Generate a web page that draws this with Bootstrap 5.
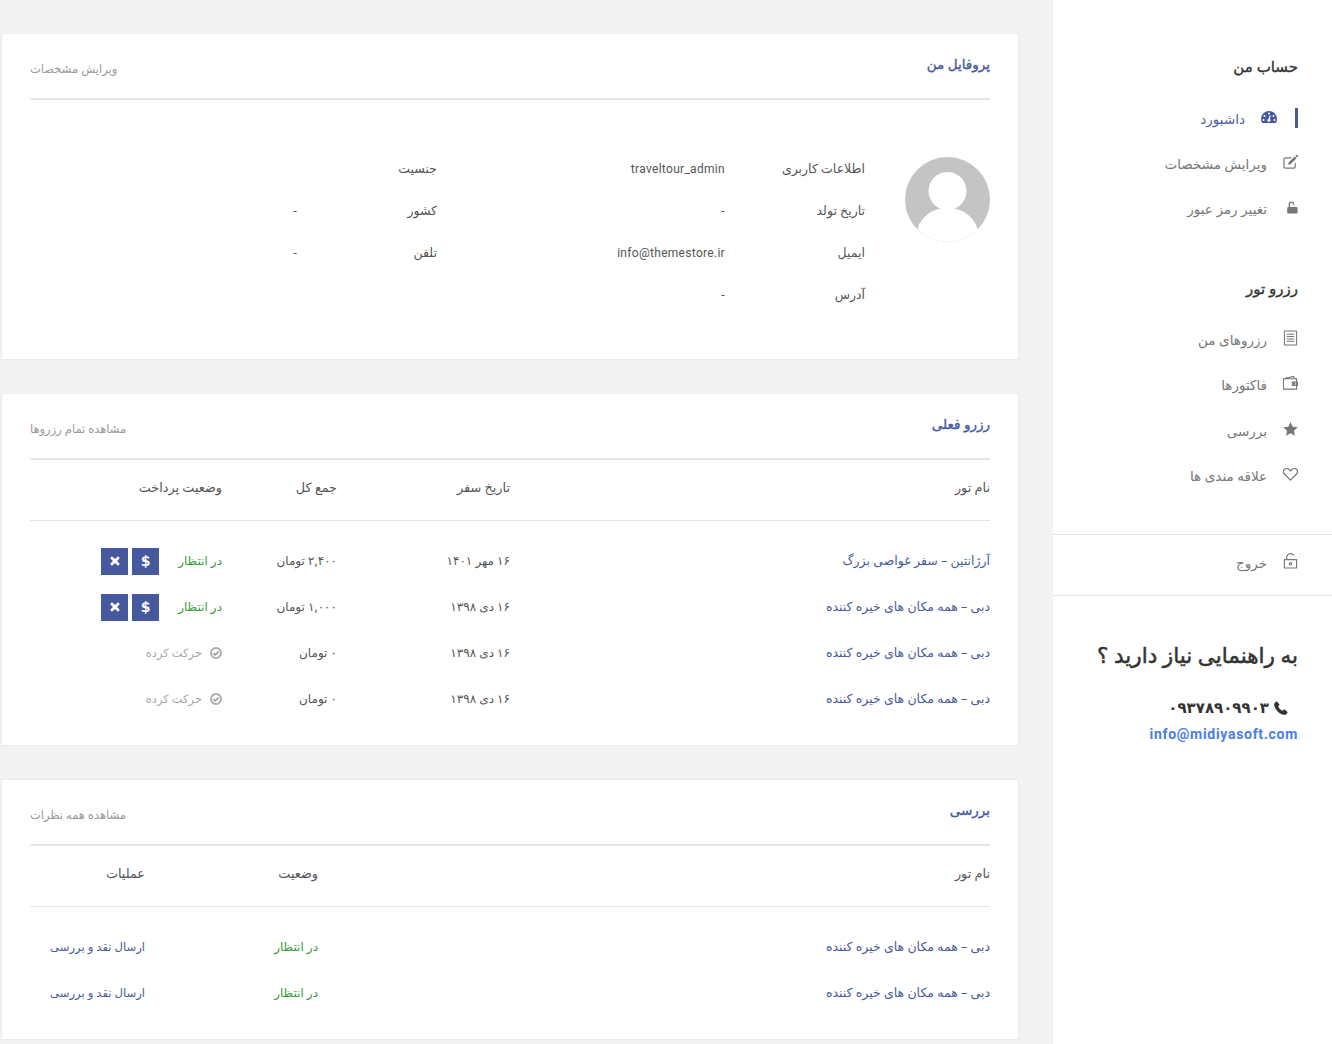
<!DOCTYPE html>
<html lang="fa" dir="rtl">
<head>
<meta charset="utf-8">
<title>پروفایل من</title>
<link href="https://cdn.jsdelivr.net/npm/bootstrap@5.3.0/dist/css/bootstrap.min.css" rel="stylesheet">
<style>
html,body{height:1044px;overflow:hidden}
body{background:#f3f3f3;font-family:"Noto Sans","DejaVu Sans",sans-serif;font-size:12px;color:#666}
.pg{width:1332px;height:1044px;overflow:hidden}
.side{width:279px;flex:none;background:#fff;height:1044px}
.main{width:1018px;margin-right:34px;margin-left:1px;padding-top:33px}
.sec-title{font-size:15px;font-weight:400;-webkit-text-stroke:.35px #333;color:#333;margin:0 0 20px;line-height:20px}
.side-group{padding:56px 34px 0}
.side-group+.side-group{padding-top:47px}
.side-group+.side-group .sec-title{margin-bottom:19px}
.side-group+.side-group .side-link{height:45.5px}
.side-link{height:45px;color:#777;font-size:13.5px;text-decoration:none;gap:16px;position:relative}
.side-link svg{width:15px;height:16px;flex:none;margin-top:-4px}
.side-link span{line-height:20px}
.side-link.on{color:#4a5b9c;padding-right:21px;gap:16px}
.side-link.on svg{width:16px}
.on-bar{position:absolute;right:0;top:12px;width:3px;height:20px;background:#46599f}
.exit-row{border-top:1px solid #e6e6e6;border-bottom:1px solid #e6e6e6;height:62px;padding:0 34px 4px;margin-top:35px}
.help{padding:46px 34px 0}
.help h4{font-size:21.5px;font-weight:400;-webkit-text-stroke:.5px #333;color:#333;margin:0 0 30px;line-height:26px;white-space:nowrap}
.help-tel{font-family:"DejaVu Sans",sans-serif;font-size:15px;font-weight:700;color:#333;line-height:20px;gap:5px;padding-right:10px;letter-spacing:3.3px}
.help-mail{font-family:Roboto,sans-serif;font-weight:700;font-size:14px;color:#4d7ce8;letter-spacing:.7px;line-height:20px;margin-top:6px;text-align:right;text-decoration:none;display:block}
.box{background:#fff;border:1px solid #ebebeb;padding:0 28px;margin-bottom:33px}
.box-head{height:66px;border-bottom:2px solid #e6e6e6;padding-top:20px}
.box-title{font-size:13.5px;font-weight:400;-webkit-text-stroke:.35px #46599f;color:#46599f;line-height:20px;margin:0}
.box-link{font-size:11.5px;color:#999;text-decoration:none;line-height:20px;margin-top:5px}
.prof{height:259px;padding-top:58px;gap:40px}
.avatar{width:85px;height:85px;flex:none;margin-top:-1px}
.prof-grid{display:grid;grid-template-columns:140px 288px 140px 140px;grid-auto-rows:42px;color:#555;font-size:12.5px;margin-top:1px}
.prof-grid div{line-height:20px;height:42px}
.prof-grid .prof-en{font-family:Roboto,sans-serif;font-size:12px;letter-spacing:.3px}
.box-mid{height:353px}
.tb{width:960px;table-layout:fixed;margin:0;color:#555;font-size:12px;border-collapse:collapse}
.tb th{font-weight:400;font-size:12.8px;height:60px;border-bottom:1px solid #e6e6e6;padding:0 0 4px;vertical-align:middle}
.tb td{height:46px;padding:0;vertical-align:middle}
.tb tbody tr:first-child td{padding-top:18px;height:64px}
.tb .tour{color:#4a5b9c;font-size:12.5px}
.wait{color:#3a9a3a}
.wait-fix{width:43px;margin-left:16px;white-space:nowrap}
.done{color:#aaa;gap:8px;font-size:11.5px}
.done svg{width:12px;height:12px}
.act{width:27px;height:27px;background:#46599f;color:#fff;display:flex;align-items:center;justify-content:center;border:0;padding:0;border-radius:0}
.act svg{width:14px;height:14px}
.act b{font-family:"DejaVu Sans",sans-serif;font-size:14px}
.review-link{color:#4a5b9c;text-decoration:none;font-size:11.6px}
.box-last{height:261px;margin-bottom:0}
</style>
</head>
<body>
<div class="pg d-flex">
  <aside class="side">
    <div class="side-group">
      <h5 class="sec-title">حساب من</h5>
      <a href="#" class="side-link on d-flex align-items-center"><i class="on-bar"></i>
        <svg viewBox="0 0 16 16"><path fill="#46599f" fill-rule="evenodd" d="M8 2a8 8 0 0 0-8 8c0 1.4.4 2.7 1 3.8.1.2.4.2.5.2h13c.2 0 .4 0 .5-.2.6-1.1 1-2.4 1-3.8a8 8 0 0 0-8-8zM8 3.500a1 1 0 1 1 0 2 1 1 0 0 1 0-2zM3.500 6a1 1 0 1 1 0 2 1 1 0 0 1 0-2zM12.500 6a1 1 0 1 1 0 2 1 1 0 0 1 0-2zM2.500 10a1 1 0 1 1 0 2 1 1 0 0 1 0-2zM13.500 10a1 1 0 1 1 0 2 1 1 0 0 1 0-2zM9.800 6.500 8.900 10.200a1.500 1.500 0 1 1-1.400-.3l1.300-3.600z"/></svg>
        <span>داشبورد</span></a>
      <a href="#" class="side-link d-flex align-items-center">
        <svg viewBox="0 0 16 16" fill="none" stroke="#777"><path stroke-width="1.300" d="M13 9v4a1.500 1.500 0 0 1-1.500 1.500h-9A1.500 1.500 0 0 1 1 13V5a1.500 1.500 0 0 1 1.500-1.500H9"/><path fill="#777" stroke="none" d="M6 8.500 12.500 2l2 2L8 10.500l-2.500.5zM13.200 1.300l.8-.8c.3-.3.7-.3 1 0l1 1c.3.3.3.7 0 1l-.8.8z"/></svg>
        <span>ویرایش مشخصات</span></a>
      <a href="#" class="side-link d-flex align-items-center">
        <svg viewBox="0 0 16 16"><path fill="#777" d="M5 8V5a3 3 0 0 1 6 0v.5H9.500V5a1.500 1.500 0 0 0-3 0v3h7a1 1 0 0 1 1 1v5a1 1 0 0 1-1 1h-9a1 1 0 0 1-1-1V9a1 1 0 0 1 1-1z" transform="translate(1 0)"/></svg>
        <span>تغییر رمز عبور</span></a>
    </div>
    <div class="side-group">
      <h5 class="sec-title">رزرو تور</h5>
      <a href="#" class="side-link d-flex align-items-center">
        <svg viewBox="0 0 16 16" fill="none" stroke="#777" stroke-width="1.100"><path d="M1.500.5h13v15h-13zM4 4h8M4 6.500h8M4 9h8M4 11.500h8"/></svg>
        <span>رزروهای من</span></a>
      <a href="#" class="side-link d-flex align-items-center">
        <svg viewBox="0 0 16 16" fill="none" stroke="#777" stroke-width="1.200"><path d="M.5 3.500h14v11H.500zM.5 3.500 11 1l2 2.500M10 7h5.500v3.500H10z"/><circle cx="12" cy="8.700" r=".7" fill="#777"/></svg>
        <span>فاکتورها</span></a>
      <a href="#" class="side-link d-flex align-items-center">
        <svg viewBox="0 0 16 16"><path fill="#777" d="M8 .5l2.300 5 5.400.6-4 3.700 1.100 5.400L8 12.500l-4.800 2.700 1.100-5.400-4-3.700 5.400-.6z"/></svg>
        <span>بررسی</span></a>
      <a href="#" class="side-link d-flex align-items-center">
        <svg viewBox="0 0 16 16" fill="none" stroke="#777" stroke-width="1.300"><path d="M8 14.500 1.800 8.300C.2 6.700.2 4.500 1.500 3.200s3.700-1.300 5 0L8 4.700l1.500-1.500c1.300-1.300 3.700-1.300 5 0s1.300 3.500-.3 5.100z"/></svg>
        <span>علاقه مندی ها</span></a>
    </div>
    <div class="exit-row d-flex align-items-center">
      <a href="#" class="side-link d-flex align-items-center w-100">
        <svg viewBox="0 0 16 16" fill="none" stroke="#777" stroke-width="1.200"><path d="M1.500 6.500h13v9h-13zM4 6.500V4a4 4 0 0 1 7.500-1.800"/><circle cx="8" cy="11" r="1.300"/></svg>
        <span>خروج</span></a>
    </div>
    <div class="help">
      <h4>به راهنمایی نیاز دارید ؟</h4>
      <div class="help-tel d-flex align-items-center">
        <svg width="14" height="14" viewBox="0 0 16 16"><path fill="#333" d="M3.600.8 6 3.600c.3.400.3.900 0 1.300L4.800 6.300c.8 2 2.900 4.100 4.900 4.900l1.400-1.200c.4-.3.900-.3 1.300 0l2.800 2.400c.4.400.4 1 0 1.400l-1.500 1.500c-.5.500-1.200.7-1.900.5C6 14.800 1.200 10 .2 4.500-.000 3.800.2 3.100.7 2.600L2.200.8c.4-.4 1-.4 1.400 0z"/></svg>
        <span>۰۹۳۷۸۹۰۹۹۰۳</span>
      </div>
      <a href="#" class="help-mail" dir="ltr">info@midiyasoft.com</a>
    </div>
  </aside>
  <main class="main">
    <section class="box">
      <div class="box-head d-flex justify-content-between">
        <h5 class="box-title">پروفایل من</h5>
        <a href="#" class="box-link">ویرایش مشخصات</a>
      </div>
      <div class="prof d-flex">
        <svg class="avatar" viewBox="0 0 85 85"><defs><clipPath id="cv"><circle cx="42.500" cy="42.500" r="42.500"/></clipPath></defs><circle cx="42.500" cy="42.500" r="42.500" fill="#c4c4c4"/><g clip-path="url(#cv)" fill="#fff"><circle cx="42.500" cy="34" r="19"/><path d="M12 73c4-14 16-22 30.500-22S69 59 73 73L60 90H25z"/></g></svg>
        <div class="prof-grid">
          <div>اطلاعات کاربری</div><div class="prof-en">traveltour_admin</div><div>جنسیت</div><div></div>
          <div>تاریخ تولد</div><div>-</div><div>کشور</div><div>-</div>
          <div>ایمیل</div><div class="prof-en">info@themestore.ir</div><div>تلفن</div><div>-</div>
          <div>آدرس</div><div>-</div>
        </div>
      </div>
    </section>
    <section class="box box-mid">
      <div class="box-head d-flex justify-content-between">
        <h5 class="box-title">رزرو فعلی</h5>
        <a href="#" class="box-link">مشاهده تمام رزروها</a>
      </div>
      <table class="tb">
        <colgroup><col style="width:480px"><col style="width:173px"><col style="width:115px"><col></colgroup>
        <thead><tr><th>نام تور</th><th>تاریخ سفر</th><th>جمع کل</th><th>وضعیت پرداخت</th></tr></thead>
        <tbody>
          <tr><td class="tour">آرژانتین – سفر غواصی بزرگ</td><td>۱۶ مهر ۱۴۰۱</td><td>۲,۴۰۰ تومان</td>
            <td><div class="d-flex align-items-center gap-1"><span class="wait wait-fix">در انتظار</span><button class="act" aria-label="پرداخت"><b>$</b></button><button class="act" aria-label="لغو"><svg viewBox="0 0 16 16"><path stroke="#fff" stroke-width="3.200" stroke-linecap="round" d="M4.500 4.500l7 7M11.500 4.500l-7 7"/></svg></button></div></td></tr>
          <tr><td class="tour">دبی – همه مکان های خیره کننده</td><td>۱۶ دی ۱۳۹۸</td><td>۱,۰۰۰ تومان</td>
            <td><div class="d-flex align-items-center gap-1"><span class="wait wait-fix">در انتظار</span><button class="act" aria-label="پرداخت"><b>$</b></button><button class="act" aria-label="لغو"><svg viewBox="0 0 16 16"><path stroke="#fff" stroke-width="3.200" stroke-linecap="round" d="M4.500 4.500l7 7M11.500 4.500l-7 7"/></svg></button></div></td></tr>
          <tr><td class="tour">دبی – همه مکان های خیره کننده</td><td>۱۶ دی ۱۳۹۸</td><td>۰ تومان</td>
            <td><div class="done d-flex align-items-center"><svg viewBox="0 0 16 16" fill="none" stroke="#aaa" stroke-width="2.500"><circle cx="8" cy="8" r="6.700"/><path d="M4.500 8l2.500 2.500L11.500 6"/></svg><span>حرکت کرده</span></div></td></tr>
          <tr><td class="tour">دبی – همه مکان های خیره کننده</td><td>۱۶ دی ۱۳۹۸</td><td>۰ تومان</td>
            <td><div class="done d-flex align-items-center"><svg viewBox="0 0 16 16" fill="none" stroke="#aaa" stroke-width="2.500"><circle cx="8" cy="8" r="6.700"/><path d="M4.500 8l2.500 2.500L11.500 6"/></svg><span>حرکت کرده</span></div></td></tr>
        </tbody>
      </table>
    </section>
    <section class="box box-last">
      <div class="box-head d-flex justify-content-between">
        <h5 class="box-title">بررسی</h5>
        <a href="#" class="box-link">مشاهده همه نظرات</a>
      </div>
      <table class="tb">
        <colgroup><col style="width:672px"><col style="width:173px"><col></colgroup>
        <thead><tr><th>نام تور</th><th>وضعیت</th><th>عملیات</th></tr></thead>
        <tbody>
          <tr><td class="tour">دبی – همه مکان های خیره کننده</td><td class="wait">در انتظار</td><td><a href="#" class="review-link">ارسال نقد و بررسی</a></td></tr>
          <tr><td class="tour">دبی – همه مکان های خیره کننده</td><td class="wait">در انتظار</td><td><a href="#" class="review-link">ارسال نقد و بررسی</a></td></tr>
        </tbody>
      </table>
    </section>
  </main>
</div>
<script src="https://cdn.jsdelivr.net/npm/bootstrap@5.3.0/dist/js/bootstrap.bundle.min.js"></script>
</body>
</html>
